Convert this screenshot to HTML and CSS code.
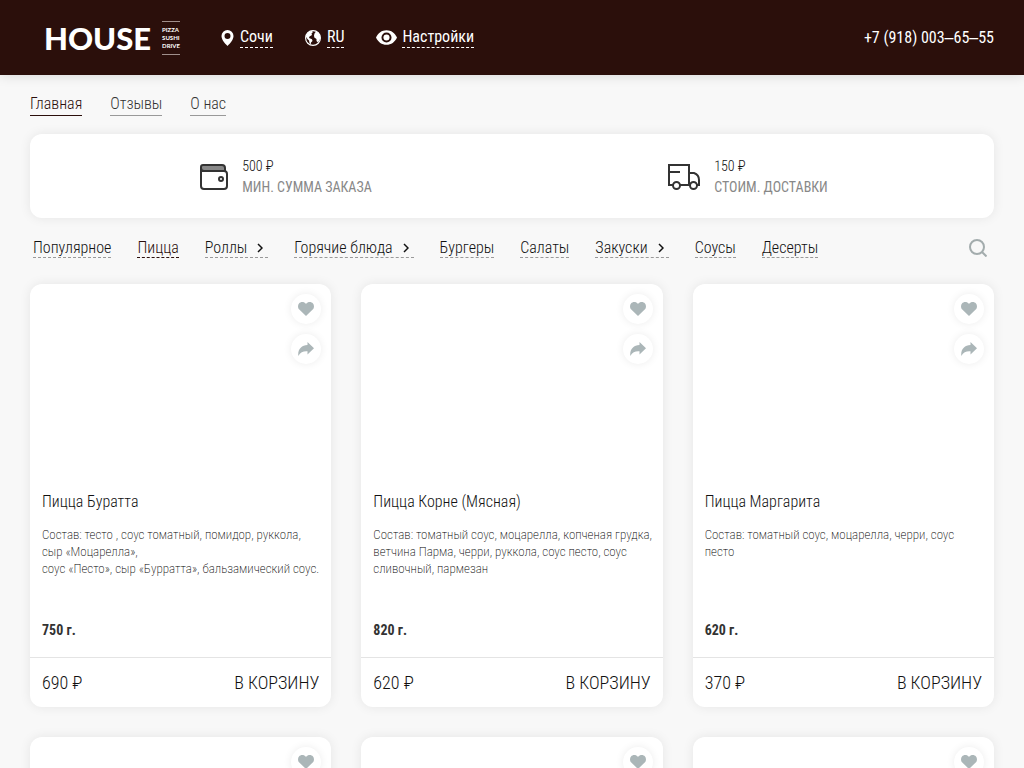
FILE: index.html
```html
<!DOCTYPE html>
<html lang="ru">
<head>
<meta charset="utf-8">
<meta name="viewport" content="width=device-width, initial-scale=1">
<title>HOUSE — Пицца</title>
<link rel="stylesheet" href="styles.css">
</head>
<body>
<svg class="sprite" aria-hidden="true">
  <symbol id="heart" viewBox="0 0 16 14"><path d="M8 14 1.300 7.600C-.3 6-.4 3.300 1 1.600 2.700-.4 6-.5 8 2c2-2.500 5.300-2.400 7-.4 1.400 1.700 1.300 4.400-.3 6z"/></symbol>
  <symbol id="share" viewBox="0 0 16 14"><path d="M9.500 0 16 6.200 9.500 12.400V9.300C5.500 9 2.500 10 .3 14-.4 7.500 3.500 3.300 9.500 3.100z"/></symbol>
  <symbol id="chevron" viewBox="0 0 6 10"><path d="m1 1 4 4-4 4" fill="none" stroke="currentColor" stroke-width="1.500"/></symbol>
</svg>
<header class="header">
  <a class="logo" href="#" aria-label="House Pizza Sushi Drive">
    <span class="logo-name">HOUSE</span>
    <span class="logo-tags"><span>PIZZA</span><span>SUSHI</span><span>DRIVE</span></span>
  </a>
  <nav class="tools" aria-label="Параметры">
    <a class="tool" href="#"><svg width="13" height="16" viewBox="0 0 12 16"><path fill="currentColor" fill-rule="evenodd" d="M6 0a6 6 0 0 1 6 6c0 3.500-3 7-6 10C3 13 0 9.500 0 6a6 6 0 0 1 6-6zm0 3a3 3 0 1 0 0 6 3 3 0 0 0 0-6z"/></svg><span>Сочи</span></a>
    <a class="tool" href="#"><svg width="16" height="16" viewBox="0 0 16 16"><circle cx="8" cy="8" r="7.400" fill="none" stroke="currentColor" stroke-width="1.200"/><path fill="currentColor" d="M.8 6.500 3 2.500 6.500.8 8 2 6.500 3.500 7 5 4.500 6.500 4 8l3 1.200.5 1.800L6 12.500 5.800 14.500 4.500 13 4 10.500 2.500 9zM9.500 3.500 11 1.500 13.800 3 15.300 7l-.5 2.500-1.800 3-1.500-1.500v-2L9.300 7.500 9 5.500z"/></svg><span>RU</span></a>
    <a class="tool" href="#"><svg width="21" height="15" viewBox="0 0 20 14"><path fill="currentColor" fill-rule="evenodd" d="M10 0c4.500 0 8 2.600 10 7-2 4.400-5.500 7-10 7S2 11.400 0 7c2-4.400 5.500-7 10-7zm0 2.200a4.800 4.800 0 1 0 0 9.600 4.800 4.800 0 0 0 0-9.600z"/><circle cx="10" cy="7" r="2.900" fill="currentColor"/></svg><span>Настройки</span></a>
  </nav>
  <a class="phone" href="tel:+79180036555">+7 (918) 003‒65‒55</a>
</header>
<main class="page">
  <nav class="pages" aria-label="Страницы">
    <a class="active" href="#">Главная</a><a href="#">Отзывы</a><a href="#">О нас</a>
  </nav>
  <section class="terms">
    <div class="term">
      <svg width="28" height="26" viewBox="0 0 28 26" fill="none" stroke="#333" stroke-width="2"><path d="M3 1h19a3 3 0 0 1 3 3v3H1V3a2 2 0 0 1 2-2z" fill="#888"/><path d="M1 4v18a3 3 0 0 0 3 3h20a3 3 0 0 0 3-3V10a3 3 0 0 0-3-3H4a3 3 0 0 1-3-3z"/><circle cx="21" cy="15" r="2"/></svg>
      <dl class="term-text"><dd>500 ₽</dd><dt>МИН. СУММА ЗАКАЗА</dt></dl>
    </div>
    <div class="term">
      <svg width="32" height="26" viewBox="0 0 32 26" fill="none" stroke="#333" stroke-width="2"><path d="M5 21H1V1h20v20H12M1 8h11M21 9h5c3 1 5 4 5 7v5h-2M21 21h1"/><circle cx="8.500" cy="21.500" r="3.500"/><circle cx="25.500" cy="21.500" r="3.500"/></svg>
      <dl class="term-text"><dd>150 ₽</dd><dt>СТОИМ. ДОСТАВКИ</dt></dl>
    </div>
  </section>
  <div class="menu-bar">
    <nav class="menu" aria-label="Меню">
      <a href="#">Популярное</a>
      <a class="active" href="#">Пицца</a>
      <a class="more" href="#">Роллы<svg width="6" height="10"><use href="#chevron"/></svg></a>
      <a class="more" href="#">Горячие блюда<svg width="6" height="10"><use href="#chevron"/></svg></a>
      <a href="#">Бургеры</a>
      <a href="#">Салаты</a>
      <a class="more" href="#">Закуски<svg width="6" height="10"><use href="#chevron"/></svg></a>
      <a href="#">Соусы</a>
      <a href="#">Десерты</a>
    </nav>
    <button class="search" type="button" aria-label="Поиск"><svg width="18" height="18" viewBox="0 0 18 18" fill="none" stroke="currentColor" stroke-width="2"><circle cx="8" cy="8" r="7"/><path d="m13 13 4.500 4.500"/></svg></button>
  </div>
  <section class="cards">
    <article class="card">
      <div class="photo"><button type="button" aria-label="В избранное"><svg width="16" height="14"><use href="#heart"/></svg></button><button type="button" aria-label="Поделиться"><svg width="16" height="14"><use href="#share"/></svg></button></div>
      <div class="info"><h2>Пицца Буратта</h2><p class="desc">Состав: тесто , соус томатный, помидор, руккола, сыр «Моцарелла»,<br>соус «Песто», сыр «Бурратта», бальзамический соус.</p><p class="weight">750 г.</p></div>
      <div class="buy"><span>690 ₽</span><button type="button">В КОРЗИНУ</button></div>
    </article>
    <article class="card">
      <div class="photo"><button type="button" aria-label="В избранное"><svg width="16" height="14"><use href="#heart"/></svg></button><button type="button" aria-label="Поделиться"><svg width="16" height="14"><use href="#share"/></svg></button></div>
      <div class="info"><h2>Пицца Корне (Мясная)</h2><p class="desc">Состав: томатный соус, моцарелла, копченая грудка, ветчина Парма, черри, руккола, соус песто, соус сливочный, пармезан</p><p class="weight">820 г.</p></div>
      <div class="buy"><span>620 ₽</span><button type="button">В КОРЗИНУ</button></div>
    </article>
    <article class="card">
      <div class="photo"><button type="button" aria-label="В избранное"><svg width="16" height="14"><use href="#heart"/></svg></button><button type="button" aria-label="Поделиться"><svg width="16" height="14"><use href="#share"/></svg></button></div>
      <div class="info"><h2>Пицца Маргарита</h2><p class="desc">Состав: томатный соус, моцарелла, черри, соус песто</p><p class="weight">620 г.</p></div>
      <div class="buy"><span>370 ₽</span><button type="button">В КОРЗИНУ</button></div>
    </article>
    <article class="card"><div class="photo"><button type="button" aria-label="В избранное"><svg width="16" height="14"><use href="#heart"/></svg></button></div></article>
    <article class="card"><div class="photo"><button type="button" aria-label="В избранное"><svg width="16" height="14"><use href="#heart"/></svg></button></div></article>
    <article class="card"><div class="photo"><button type="button" aria-label="В избранное"><svg width="16" height="14"><use href="#heart"/></svg></button></div></article>
  </section>
</main>
</body>
</html>
```

FILE: styles.css
```css
* { box-sizing: border-box; }
html { scrollbar-width: none; }
body {
  margin: 0;
  background: #f8f8f8;
  color: #111;
  font: 300 16px/20px "Roboto Condensed", "Liberation Sans Narrow", Roboto, sans-serif;
}
a { color: inherit; text-decoration: none; }
button { border: 0; padding: 0; background: none; color: inherit; font: inherit; cursor: pointer; }
h2, p, dl, dd, dt { margin: 0; font-weight: inherit; }
svg { flex: none; display: block; }
.sprite { position: absolute; width: 0; height: 0; }

.header {
  display: flex;
  align-items: center;
  min-height: 75px;
  padding: 0 30px 0 44px;
  background: #2b0f0b;
  color: #fff;
  font-weight: 400;
  box-shadow: 0 0 12px rgba(0, 0, 0, .15);
}
.logo { display: flex; align-items: center; gap: 11px; width: 135px; }
.logo-name { font: 900 31px/36px Lato, sans-serif; }
.logo-tags {
  display: flex;
  flex-direction: column;
  border: solid #a08f8c;
  border-width: 1px 0;
  padding: 4px 0;
  font: 700 6px/8px Lato, sans-serif;
}
.tools { display: flex; align-items: center; gap: 32px; margin-left: 42px; }
.tool { display: flex; align-items: center; gap: 6px; }
.tool:last-child { gap: 5px; }
.tool span { border-bottom: 1px dashed #fff; }
.phone { margin-left: auto; }

.page { padding: 18px 30px 0; }
.pages { display: flex; gap: 28px; color: #333; }
.pages a { border-bottom: 1px solid #999; line-height: 22px; }
.pages .active { border-color: #2b0f0b; color: #2b0f0b; }

.terms, .card { background: #fff; border-radius: 12px; box-shadow: 0 0 12px rgba(0, 0, 0, .08); }
.terms { display: flex; justify-content: space-around; margin-top: 18px; padding: 21px 18px 20px 22px; }
.term { display: flex; align-items: center; gap: 14px; }
.term-text { padding-top: 1px; font-size: 14px; line-height: 21px; }
.term-text dt { color: #888; font-weight: 400; }

.menu-bar { display: flex; align-items: center; justify-content: space-between; padding: 19px 7px 26px 3px; }
.menu { display: flex; gap: 26px; }
.menu a { padding-top: 2px; border-bottom: 1px dashed #999; line-height: 18px; white-space: nowrap; }
.menu .active { border-color: #2b0f0b; color: #2b0f0b; }
.menu .more { display: flex; align-items: center; gap: 10px; padding-right: 5px; }
.search { color: #a3acad; }

.cards { display: grid; grid-template-columns: repeat(3, 1fr); gap: 30px; }
.card { display: flex; flex-direction: column; }
.photo {
  display: flex;
  flex-direction: column;
  align-items: flex-end;
  gap: 10px;
  min-height: 208px;
  padding: 10px;
}
.photo button {
  display: grid;
  place-items: center;
  width: 30px;
  height: 30px;
  border-radius: 50%;
  background: #fff;
  box-shadow: 0 0 8px rgba(0, 0, 0, .08);
  fill: #abb6b8;
}
.info { display: flex; flex: 1; flex-direction: column; padding: 0 10px 17px 12px; }
.info h2 { font-size: 16px; line-height: 20px; }
.desc { min-height: 85px; margin: 14px 0 9px; color: #000; font-size: 13px; font-weight: 200; line-height: 17px; }
.weight { margin-top: auto; color: #333; font-size: 14px; font-weight: 700; }
.buy {
  display: flex;
  align-items: center;
  justify-content: space-between;
  min-height: 50px;
  padding: 0 12px;
  border-top: 1px solid #e4e4e4;
  font-size: 18px;
}
```
